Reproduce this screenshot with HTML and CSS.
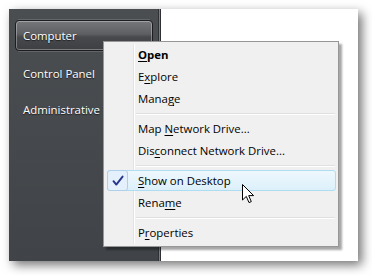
FILE: index.html
```html
<!DOCTYPE html>
<html>
<head>
<meta charset="utf-8">
<link rel="stylesheet" href="styles.css">
</head>
<body>
<div class="shot">
  <div class="panel">
    <div class="btn">Computer</div>
    <div class="link">Control Panel</div>
    <div class="link">Administrative Tools</div>
  </div>
  <div class="divider"></div>
  <div class="content"></div>

  <div class="menu">
    <div class="col"></div>
    <div class="item bold"><span class="u">O</span>pen</div>
    <div class="item">E<span class="u">x</span>plore</div>
    <div class="item">Mana<span class="u">g</span>e</div>
    <div class="sep"></div>
    <div class="item">Map <span class="u">N</span>etwork Drive...</div>
    <div class="item">Dis<span class="u">c</span>onnect Network Drive...</div>
    <div class="sep"></div>
    <div class="item hot">
      <span class="check"><svg width="12" height="12" viewBox="0 0 12 12"><path d="M1.5 6.2 L4.3 9.6 L10.6 1.6" fill="none" stroke="#26358f" stroke-width="1.9" stroke-linecap="round" stroke-linejoin="round"/></svg></span>
      <span class="label"><span class="u">S</span>how on Desktop</span>
    </div>
    <div class="item">Rena<span class="u">m</span>e</div>
    <div class="sep"></div>
    <div class="item">P<span class="u">r</span>operties</div>
  </div>

  <svg class="cursor" width="13" height="20" viewBox="0 0 13 20"><path d="M0.5 0.5 L0.5 16 L4.3 12.4 L7 18.6 L9.3 17.6 L6.7 11.6 L11.6 11.6 Z" fill="#fff" stroke="#000" stroke-width="1" stroke-linejoin="miter"/></svg>
</div>
</body>
</html>
```
FILE: styles.css
```css
html, body {
  margin: 0;
  padding: 0;
  background: #fff;
}
body {
  width: 372px;
  height: 275px;
  overflow: hidden;
  font-family: "Open Sans", "Noto Sans", sans-serif;
  font-size: 11.4px;
}
.shot {
  position: relative;
  margin: 9px 0 0 9px;
  width: 349px;
  height: 252px;
  display: flex;
  box-shadow: 4px 4px 10px rgba(0,0,0,0.55);
}
.panel {
  width: 149px;
  background: linear-gradient(#4b4e51, #404448);
  padding: 11px 0 0 6px;
  box-sizing: border-box;
  display: flex;
  flex-direction: column;
}
.btn {
  width: 138px;
  height: 31px;
  box-sizing: border-box;
  border: 1px solid #1c1d1f;
  border-radius: 4px;
  background: linear-gradient(#75777a 0%, #5d5f62 45%, #47494c 55%, #3d3f42 100%);
  box-shadow: inset 0 0 0 1px rgba(255,255,255,0.32), 0 -4px 0 -3px rgba(255,255,255,0.14), 0 4px 0 -3px rgba(255,255,255,0.14);
  color: #fff;
  padding-left: 7px;
  line-height: 29px;
  text-shadow: 0 1px 1px rgba(0,0,0,0.6);
}
.link {
  color: #fff;
  padding-left: 8px;
  height: 36px;
  line-height: 36px;
  white-space: nowrap;
  overflow: hidden;
  text-shadow: 0 1px 1px rgba(0,0,0,0.6);
}
.btn + .link {
  margin-top: 5px;
}
.divider {
  width: 3px;
  background: linear-gradient(90deg, #2f3134 0 1px, #7c7e80 1px 2px, #2f3134 2px 3px);
}
.content {
  flex: 1;
  background: #fff;
}
.menu {
  position: absolute;
  left: 94px;
  top: 32px;
  width: 236px;
  box-sizing: border-box;
  background: #f0f0f0;
  border: 1px solid #979797;
  padding: 2px;
  box-shadow: 3px 3px 2px rgba(0,0,0,0.35);
  color: #000;
}
.col {
  position: absolute;
  left: 29px;
  top: 2px;
  bottom: 2px;
  width: 2px;
  background: linear-gradient(90deg, #e2e3e3 0 1px, #fff 1px 2px);
}
.item {
  position: relative;
  height: 22px;
  line-height: 22px;
  padding-left: 32px;
  white-space: nowrap;
}
.bold {
  font-weight: bold;
}
.u {
  text-decoration: underline;
  text-underline-offset: 2px;
}
.sep {
  height: 8px;
  margin-left: 30px;
  margin-right: 1px;
  background: linear-gradient(#f0f0f0 0 3px, #e0e0e0 3px 4px, #fff 4px 5px, #f0f0f0 5px);
  position: relative;
}
.hot::before {
  content: "";
  position: absolute;
  left: 1px;
  right: 0;
  top: 0;
  bottom: 1px;
  border: 1px solid #aedcf0;
  border-radius: 3px;
  background: linear-gradient(#eef8fd, #dcf0fa);
}
.label {
  position: relative;
}
.check {
  position: absolute;
  left: 1px;
  top: 0;
  width: 21px;
  height: 21px;
  box-sizing: border-box;
  border: 1px solid #aed0ea;
  border-radius: 3px;
  background: #e4f0fb;
  display: flex;
  align-items: center;
  justify-content: center;
}
.cursor {
  position: absolute;
  left: 233px;
  top: 175px;
}
```
